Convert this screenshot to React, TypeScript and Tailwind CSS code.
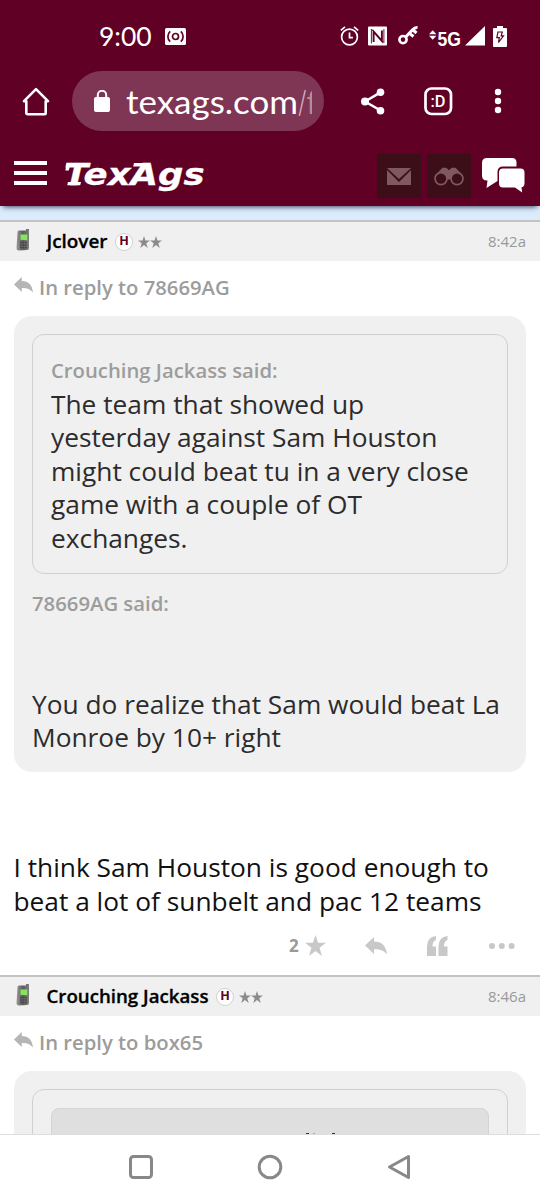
import React from 'react';

function StatusBar() {
  return (
    <div className="flex h-[72px] items-center pl-[99px] text-white">
      <span className="w-[53px] whitespace-nowrap font-['Lato'] text-[26.5px] leading-none">9:00</span>
      <svg className="ml-[13px]" width="21" height="17" viewBox="0 0 21 17">
        <rect width="21" height="17" rx="1.5" fill="#fff" />
        <g fill="none" stroke="#5f0024" strokeWidth="1.7">
          <circle cx="10.5" cy="8.5" r="3" />
          <path d="M5.2 3.3a7 7 0 0 0 0 10.4M15.8 3.3a7 7 0 0 1 0 10.4" />
        </g>
      </svg>
      <svg className="ml-[154px]" width="19" height="20" viewBox="0 0 19 20" fill="none" stroke="#fff" strokeWidth="1.7">
        <circle cx="9.5" cy="11" r="7.9" />
        <path d="M9.5 6.5v5.2h3.4M.8 4.3 5 .9M18.2 4.3 14 .9" />
      </svg>
      <svg className="ml-[9px]" width="19" height="20" viewBox="0 0 19 20">
        <rect y=".5" width="19" height="19" rx="1" fill="#fff" />
        <path d="M5.6 16V5.5l8.3 9.5V4.5" fill="none" stroke="#5f0024" strokeWidth="1.9" />
        <path d="M3.4 17.5V3.2l2.2 2.3M15.9 3v13.7l-2-2.2" fill="none" stroke="#5f0024" strokeWidth=".9" />
      </svg>
      <svg className="ml-[11px]" width="21" height="20" viewBox="0 0 21 20" fill="none" stroke="#fff">
        <circle cx="5" cy="13.6" r="3.6" strokeWidth="2.6" />
        <path d="m7.5 11.2 6.8-7.2q2.6-2.7 5.2-2.4M11.5 7.3l4 3.2M15 4l3.5 3" strokeWidth="3" />
      </svg>
      <svg className="ml-[10px]" width="56" height="26" viewBox="0 -2 56 26" fill="#fff">
        <path d="M0 9.2l3.7-4 3.7 4zM0 10.8h7.4l-3.7 4z" />
        <text x="8.5" y="20.5" fontFamily="Liberation Sans" fontWeight="700" fontSize="21" textLength="23.5" lengthAdjust="spacingAndGlyphs">5G</text>
        <path d="M56 1v19.500H36z" />
      </svg>
      <svg className="ml-[8px]" width="14" height="21" viewBox="0 0 14 21">
        <path d="M4 0h6v2h3q1 0 1 1v17q0 1-1 1H1q-1 0-1-1V3q0-1 1-1h3z" fill="#fff" />
        <path d="M5 6h4.3L8.2 9.8h2.3L5.5 16.5l.8-4.8H3.8z" fill="none" stroke="#5f0024" strokeWidth="1.2" />
      </svg>
    </div>
  );
}

function BrowserBar() {
  return (
    <div className="flex h-[68px] items-start text-white">
      <svg className="ml-[22px] mt-[15px]" width="28" height="29" viewBox="0 0 28 29" fill="none" stroke="#fff" strokeWidth="2.6" strokeLinejoin="round" strokeLinecap="round">
        <path d="m2 14.2 12-12 12 12h-2.3v11.9a1.2 1.2 0 0 1-1.2 1.2h-17a1.2 1.2 0 0 1-1.2-1.2V14.2z" />
      </svg>
      <div className="-mt-px ml-[22px] flex h-[60px] w-[252px] items-center rounded-full bg-[#7f3554] pl-[22px]">
        <svg width="16" height="22" viewBox="0 0 16 22">
          <rect y="7" width="16" height="15" rx="2" fill="#fff" />
          <path d="M3.8 8V5a4.2 4.2 0 0 1 8.4 0v3" fill="none" stroke="#fff" strokeWidth="2" />
        </svg>
        <svg className="ml-[16px]" width="196" height="48" viewBox="0 0 196 48" fontFamily="Lato, sans-serif" fontSize="32">
          <defs>
            <clipPath id="urlEnd"><path d="M0 0h186v48H0z" /></clipPath>
          </defs>
          <text x="0" y="37" fill="#fff" textLength="172" lengthAdjust="spacingAndGlyphs">texags.com</text>
          <text x="172" y="37" fill="#d0b2c0" textLength="8.5" lengthAdjust="spacingAndGlyphs">/</text>
          <text x="180.5" y="37" fill="#b78ca0" clipPath="url(#urlEnd)">f</text>
        </svg>
      </div>
      <svg className="ml-[37px] mt-[16px]" width="24" height="27" viewBox="0 0 24 27" fill="#fff">
        <path d="M4 13.5 19.5 4.3M4 13.5l15.5 9" stroke="#fff" strokeWidth="2.6" />
        <circle cx="4" cy="13.5" r="4" />
        <circle cx="19.5" cy="4.3" r="3.8" />
        <circle cx="19.5" cy="22.7" r="3.8" />
      </svg>
      <svg className="ml-[39px] mt-[15px]" width="29" height="29" viewBox="0 0 29 29">
        <rect x="1.5" y="1.5" width="25.5" height="25.5" rx="6" fill="none" stroke="#fff" strokeWidth="2.7" />
        <text x="6.5" y="20" fill="#fff" fontFamily="Roboto" fontWeight="500" fontSize="16.5" textLength="15" lengthAdjust="spacingAndGlyphs">:D</text>
      </svg>
      <svg className="ml-[41px] mt-[16px]" width="8" height="28" viewBox="0 0 8 28" fill="#fff">
        <circle cx="4" cy="4" r="3.2" />
        <circle cx="4" cy="13" r="3.2" />
        <circle cx="4" cy="22" r="3.2" />
      </svg>
    </div>
  );
}

function SiteHeader() {
  return (
    <div className="flex h-[66px] items-start">
      <div className="ml-[14px] mt-[21px] flex w-[33px] flex-col gap-[6px]">
        <div className="h-[4px] bg-white" />
        <div className="h-[4px] bg-white" />
        <div className="h-[4px] bg-white" />
      </div>
      <svg className="ml-[15px] mt-[14px]" width="150" height="44" viewBox="0 0 150 44">
        <text x="2" y="31" fill="#fff" stroke="#fff" strokeWidth=".3" fontFamily="DejaVu Sans" fontWeight="700" fontStyle="italic" fontSize="30" textLength="140.5" lengthAdjust="spacingAndGlyphs">TexAgs</text>
        {/* slab serifs on the T and the A */}
        <path d="M4.8 9h4L6.800 16.500H3.300zM6 28h13l-.8 3.200H5.200zM72 9h12v3.500H71.200z" fill="#fff" />
      </svg>
      <div className="ml-[165px] mt-[14px] flex size-[44px] items-center justify-center bg-[#3c0f18]">
        <svg width="24" height="17" viewBox="0 0 24 17" fill="#80595f">
          <path d="M0 0h24L12 11z" />
          <path d="M0 2 12 14 24 2v15H0z" />
        </svg>
      </div>
      <div className="ml-[6px] mt-[14px] flex size-[44px] items-center justify-center bg-[#3c0f18]">
        <svg width="30" height="19" viewBox="0 0 30 19" fill="none" stroke="#80595f" strokeWidth="1.7">
          <path d="M2.5 7 8.5.8h3.7L15 3.2 17.8.8h3.7L27.5 7l-5-.5-5.5 6h-4L7.5 6.5z" fill="#80595f" stroke="none" />
          <circle cx="7" cy="11.6" r="6" fill="#3c0f18" />
          <circle cx="23" cy="11.6" r="6" fill="#3c0f18" />
        </svg>
      </div>
      <svg className="ml-[11px] mt-[18px]" width="43" height="35" viewBox="0 0 43 35" fill="#fff">
        <path d="M5 0h25q4.5 0 4.5 4.5V8.5H21q-5.500 0-5.500 5.500v9L4.500 30l1-7.500H5Q0 22.500 0 17.500V5q0-5 5-5z" />
        <path d="M21 10.500h17.500q4 0 4 4V25q0 4-3 4.300l.7 5.200-7.200-5H21q-4 0-4-4v-11q0-4 4-4z" />
      </svg>
    </div>
  );
}

function ReplyArrow({ className, width, height, fill }: { className?: string; width: number; height: number; fill: string }) {
  return (
    <svg className={className} width={width} height={height} viewBox="0 0 22 18" preserveAspectRatio="none" fill={fill}>
      <path d="M0 8.500 9 0v4.500c8 0 12 4.500 13 13-3.500-4.300-7.500-5.500-13-5.200V17z" />
    </svg>
  );
}

function Star({ size, fill }: { size: number; fill: string }) {
  return (
    <svg width={size} height={size} viewBox="0 0 24 24" fill={fill}>
      <path d="m12 0 2.900 8.900H24l-7.400 5.600L19.400 24 12 18.200 4.600 24l2.800-9.500L0 8.900h9.100z" />
    </svg>
  );
}

function PostBar({ name, nameWidth, time }: { name: string; nameWidth: number; time: string }) {
  return (
    <div className="flex h-[41px] items-center border-t-2 border-[#c3c3c3] bg-[#f0f0f0]">
      <svg className="ml-[16px] -mt-[3px]" width="14" height="22" viewBox="0 0 14 22">
        <defs>
          <linearGradient id="phone" x1="0" x2="1">
            <stop offset="0" stopColor="#9a9a9a" />
            <stop offset=".5" stopColor="#5c5c5c" />
            <stop offset="1" stopColor="#808080" />
          </linearGradient>
        </defs>
        <path d="M3 1.500h7V0h3v19q0 2-2 2l-8 .500Q.500 21.500.500 19L1.500 3q0-1.500 1.500-1.500z" fill="url(#phone)" />
        <path d="M4.500 5.500h6.800v5.800l-6.800-.5z" fill="#86e65a" />
        <path d="M4 13.500h7M4 16h7M4 18.500h7" stroke="#454545" strokeWidth="1.300" strokeDasharray="1.800 .700" />
      </svg>
      <svg className="ml-[16px]" width={nameWidth + 2} height="28">
        <text x=".5" y="20" fontFamily="Open Sans" fontSize="18" fontWeight="600" stroke="#000" strokeWidth=".3" textLength={nameWidth} lengthAdjust="spacingAndGlyphs">{name}</text>
      </svg>
      <span className="ml-[6px] flex size-[18px] items-center justify-center rounded-full border border-[#d5d0d0] bg-white font-['Open_Sans'] text-[12.5px] font-bold leading-none text-[#5f0024]">H</span>
      <div className="ml-[5px] flex">
        <Star size={12} fill="#8b8b8b" />
        <Star size={12} fill="#8b8b8b" />
      </div>
      <span className="ml-auto mr-[14px] text-[15px] text-[#999]">{time}</span>
    </div>
  );
}

function InReply({ to }: { to: string }) {
  return (
    <div className="flex h-[55px] items-center pb-[2px] pl-[14px] text-[20.25px] font-semibold text-[#9c9c9c]">
      <ReplyArrow className="mr-[6px] -mt-[5px]" width={19} height={16} fill="#b5b5b5" />
      In reply to {to}
    </div>
  );
}

export default function App() {
  return (
    <div className="flex h-[1200px] w-[540px] flex-col overflow-hidden bg-white font-['Open_Sans',sans-serif]">
      <header className="relative h-[206px] shrink-0 bg-[#5f0024] shadow-[0_4px_5px_-3px_rgba(20,30,60,0.8)]">
        <StatusBar />
        <BrowserBar />
        <SiteHeader />
      </header>

      <main className="h-[928px] shrink-0 overflow-hidden">
        <div className="h-[14px] bg-[#dcebfb]" />
        <PostBar name="Jclover" nameWidth={61} time="8:42a" />
        <InReply to="78669AG" />
        <div className="mx-[14px] h-[455.5px] rounded-[18px] bg-[#f0f0f0] p-[18px] text-[26.3px] leading-[33.5px] text-[#2c2c2c]">
          <div className="h-[240px] whitespace-nowrap rounded-[12px] border-[1.5px] border-[#d0d0d0] px-[18px] pt-[19px]">
            <p className="text-[20.3px] font-semibold leading-[33.5px] text-[#9c9c9c]">Crouching Jackass said:</p>
            <p>
              The team that showed up<br />
              yesterday against Sam Houston<br />
              might could beat tu in a very close<br />
              game with a couple of OT<br />
              exchanges.
            </p>
          </div>
          <p className="mt-[13px] text-[20.3px] font-semibold leading-[33.5px] text-[#9c9c9c]">78669AG said:</p>
          <p className="mt-[67px] whitespace-nowrap">
            You do realize that Sam would beat La<br />
            Monroe by 10+ right
          </p>
        </div>
        <p className="ml-[13.5px] mt-[79.5px] whitespace-nowrap text-[26.3px] leading-[33.5px] text-[#111]">
          I think Sam Houston is good enough to<br />
          beat a lot of sunbelt and pac 12 teams
        </p>

        {/* Post actions */}
        <div className="flex h-[57px] items-center pb-[2px] pl-[289px]">
          <span className="mr-[6px] w-[10px] text-[17px] font-bold text-[#999]">2</span>
          <Star size={21} fill="#c8c8c8" />
          <ReplyArrow className="ml-[39px]" width={22} height={18} fill="#c8c8c8" />
          <svg className="ml-[40px]" width="21" height="20" viewBox="0 0 21 20" fill="#c8c8c8">
            <path d="M9 0v4Q5.500 5 5.500 10.500H9V20H0V10.500Q0 1 9 0zM20.500 0v4Q17 5 17 10.500h3.500V20h-9v-9.500Q11.500 1 20.500 0z" />
          </svg>
          <svg className="ml-[41px]" width="26" height="6" viewBox="0 0 26 6" fill="#c8c8c8">
            <circle cx="3" cy="3" r="3" />
            <circle cx="12.800" cy="3" r="3" />
            <circle cx="22.600" cy="3" r="3" />
          </svg>
        </div>

        <PostBar name="Crouching Jackass" nameWidth={162} time="8:46a" />
        <InReply to="box65" />
        <div className="mx-[14px] h-[300px] rounded-[18px] bg-[#f0f0f0] p-[18px]">
          <div className="h-[280px] rounded-[12px] border-[1.5px] border-[#d0d0d0] p-[18px]">
            <div className="h-[200px] rounded-[8px] border border-[#d4d4d4] bg-[#dfdfdf] pl-[254px] pt-[24px]">
              {/* tops of the quote's first line, just above the fold */}
              <div className="flex">
                <div className="h-px w-[3px] bg-[#333]" />
                <div className="ml-[4px] h-px w-[2px] bg-[#aaa]" />
                <div className="ml-[17px] h-px w-[3px] bg-[#333]" />
              </div>
            </div>
          </div>
        </div>
      </main>

      <nav className="flex h-[66px] shrink-0 items-center border-t border-[#ddd] bg-white pb-px pl-[128px]">
        <svg width="26" height="26" fill="none" stroke="#888" strokeWidth="3">
          <rect x="2.500" y="2.500" width="21" height="21" rx="3" />
        </svg>
        <svg className="ml-[103px]" width="26" height="26" fill="none" stroke="#888" strokeWidth="3">
          <circle cx="13" cy="13" r="10.800" />
        </svg>
        <svg className="ml-[104px]" width="26" height="26" fill="none" stroke="#888" strokeWidth="3" strokeLinejoin="round">
          <path d="M21.500 2.500v21L2.500 13z" />
        </svg>
      </nav>
    </div>
  );
}
